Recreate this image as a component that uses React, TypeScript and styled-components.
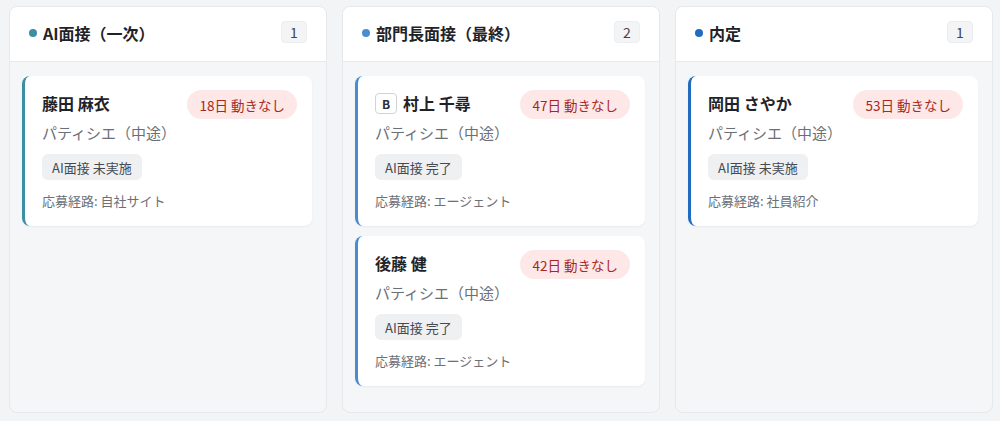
import React from 'react';
import styled, { createGlobalStyle } from 'styled-components';

const GlobalStyle = createGlobalStyle`
  html, body {
    margin: 0;
    padding: 0;
    background: #f3f4f6;
    font-family: "Noto Sans CJK JP", "Noto Sans", sans-serif;
    color: #1f2328;
  }
`;

const Board = styled.div`
  display: grid;
  grid-template-columns: repeat(3, 318px);
  gap: 15px;
  padding: 6px 9px 8px;
  height: 421px;
  box-sizing: border-box;
`;

const Column = styled.section`
  display: flex;
  flex-direction: column;
  background: #f5f6f8;
  border: 1px solid #e6e8eb;
  border-radius: 8px;
  overflow: hidden;
`;

const ColumnHeader = styled.header`
  display: flex;
  align-items: center;
  justify-content: space-between;
  height: 54px;
  padding: 0 19px 0 19px;
  background: #ffffff;
  border-bottom: 1px solid #e8eaed;
  flex-shrink: 0;
`;

const HeaderTitle = styled.h2`
  display: flex;
  align-items: center;
  gap: 6px;
  margin: 0 0 2px;
  font-size: 16px;
  font-weight: 700;
  color: #1f2328;
`;

const Dot = styled.span<{ $color: string }>`
  width: 8px;
  height: 8px;
  border-radius: 50%;
  background: ${(p) => p.$color};
`;

const Count = styled.span`
  display: inline-flex;
  align-items: center;
  justify-content: center;
  min-width: 26px;
  height: 22px;
  margin-bottom: 4px;
  border-radius: 4px;
  background: #f3f4f6;
  border: 1px solid #eceef1;
  font-size: 14px;
  color: #40454c;
  box-sizing: border-box;
`;

const CardList = styled.div`
  display: flex;
  flex-direction: column;
  gap: 10px;
  padding: 14px 14px 14px 12px;
`;

const Card = styled.article<{ $accent: string }>`
  background: #ffffff;
  border-radius: 8px;
  border-left: 3px solid ${(p) => p.$accent};
  box-shadow: 0 1px 2px rgba(16, 24, 40, 0.05);
  padding: 14px 15px 14px 17px;
  height: 150px;
  box-sizing: border-box;
`;

const CardTop = styled.div`
  display: flex;
  align-items: center;
  justify-content: space-between;
`;

const Name = styled.div`
  display: flex;
  align-items: center;
  gap: 6px;
  font-size: 16px;
  font-weight: 700;
  color: #1f2328;
  margin-top: -3px;
`;

const RankBadge = styled.span`
  display: inline-flex;
  align-items: center;
  justify-content: center;
  width: 22px;
  height: 21px;
  border: 1px solid #cfd3d8;
  border-radius: 4px;
  font-size: 12px;
  font-weight: 700;
  color: #2b2f35;
  box-sizing: border-box;
`;

const Stale = styled.span`
  display: inline-flex;
  align-items: center;
  height: 29px;
  padding: 0 12px;
  border-radius: 15px;
  background: #fde7e7;
  color: #a8281e;
  font-size: 13.5px;
`;

const Role = styled.div`
  margin-top: 3px;
  font-size: 15px;
  color: #6b7078;
`;

const Tag = styled.span`
  display: inline-flex;
  align-items: center;
  margin-top: 11px;
  height: 26px;
  padding: 0 10px;
  border-radius: 6px;
  background: #eef0f2;
  color: #454a52;
  font-size: 13px;
`;

const Source = styled.div`
  margin-top: 11px;
  font-size: 13px;
  color: #6b7078;
`;

type Candidate = {
  name: string;
  rank?: string;
  days: number;
  role: string;
  ai: string;
  source: string;
};

type Stage = {
  title: string;
  color: string;
  candidates: Candidate[];
};

const stages: Stage[] = [
  {
    title: 'AI面接（一次）',
    color: '#3a8fa3',
    candidates: [
      { name: '藤田 麻衣', days: 18, role: 'パティシエ（中途）', ai: 'AI面接 未実施', source: '自社サイト' },
    ],
  },
  {
    title: '部門長面接（最終）',
    color: '#4b8cd1',
    candidates: [
      { name: '村上 千尋', rank: 'B', days: 47, role: 'パティシエ（中途）', ai: 'AI面接 完了', source: 'エージェント' },
      { name: '後藤 健', days: 42, role: 'パティシエ（中途）', ai: 'AI面接 完了', source: 'エージェント' },
    ],
  },
  {
    title: '内定',
    color: '#1f6cc0',
    candidates: [
      { name: '岡田 さやか', days: 53, role: 'パティシエ（中途）', ai: 'AI面接 未実施', source: '社員紹介' },
    ],
  },
];

function CandidateCard({ c, accent }: { c: Candidate; accent: string }) {
  return (
    <Card $accent={accent}>
      <CardTop>
        <Name>
          {c.rank && <RankBadge>{c.rank}</RankBadge>}
          {c.name}
        </Name>
        <Stale>{c.days}日 動きなし</Stale>
      </CardTop>
      <Role>{c.role}</Role>
      <Tag>{c.ai}</Tag>
      <Source>応募経路: {c.source}</Source>
    </Card>
  );
}

export default function App() {
  return (
    <>
      <GlobalStyle />
      <Board>
        {stages.map((s) => (
          <Column key={s.title}>
            <ColumnHeader>
              <HeaderTitle>
                <Dot $color={s.color} />
                {s.title}
              </HeaderTitle>
              <Count>{s.candidates.length}</Count>
            </ColumnHeader>
            <CardList>
              {s.candidates.map((c) => (
                <CandidateCard key={c.name} c={c} accent={s.color} />
              ))}
            </CardList>
          </Column>
        ))}
      </Board>
    </>
  );
}
